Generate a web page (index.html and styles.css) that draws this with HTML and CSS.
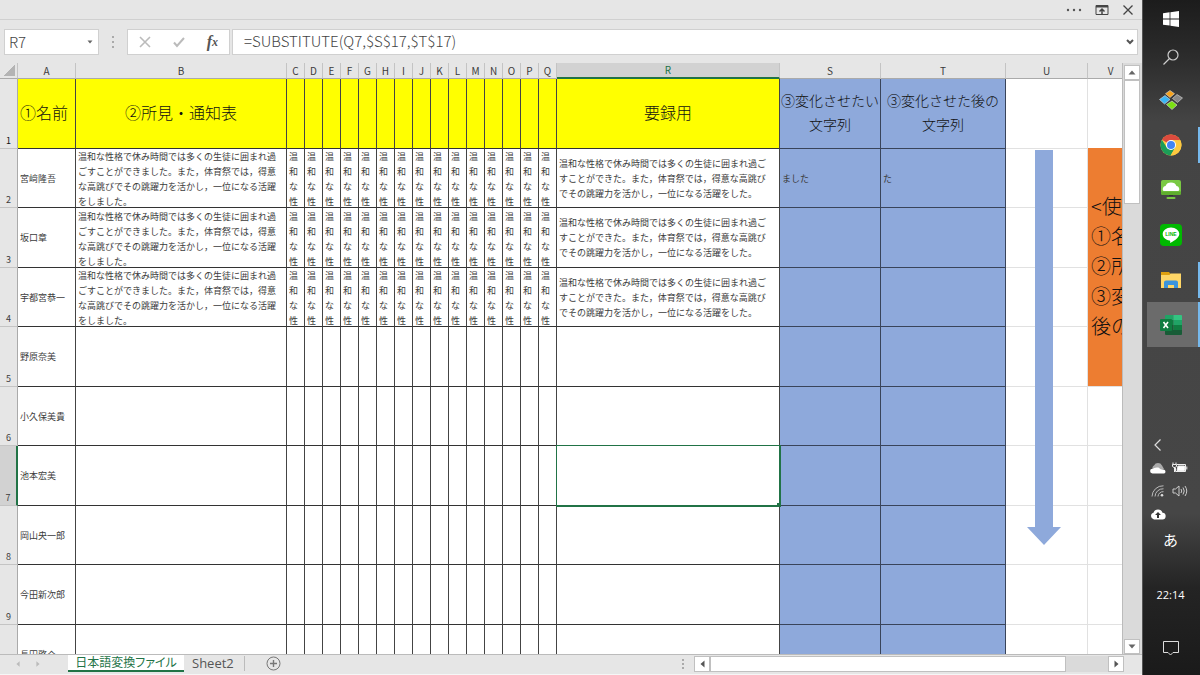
FILE: index.html
```html
<!DOCTYPE html>
<html lang="ja">
<head>
    <meta charset="UTF-8">
    <meta name="viewport" content="width=device-width, initial-scale=1.0">
    <title>日本語変換ファイル</title>
    <link rel="stylesheet" href="styles.css">
</head>
<body>
    <main class="excel">
        <!-- Window buttons -->
        <header class="titlebar">
            <button class="icon-btn" aria-label="その他">
                <svg width="16" height="12" viewBox="0 0 16 12" fill="#555"><circle cx="2" cy="6" r="1.200"/><circle cx="8" cy="6" r="1.200"/><circle cx="14" cy="6" r="1.200"/></svg>
            </button>
            <button class="icon-btn" aria-label="リボンの表示オプション">
                <svg width="14" height="12" viewBox="0 0 14 12" fill="none" stroke="#444"><path d="M1 1.500h12v9H1z"/><path d="M1 2.500h12" stroke-width="2"/><path d="M7 10V5M4.500 7.500L7 5l2.500 2.500" stroke-width="1.500"/></svg>
            </button>
            <button class="icon-btn" aria-label="閉じる">
                <svg width="12" height="12" viewBox="0 0 12 12" fill="none" stroke="#444" stroke-width="1.300"><path d="M1.500 1.500l9 9M10.500 1.500l-9 9"/></svg>
            </button>
        </header>

        <!-- Formula bar -->
        <div class="formula-bar">
            <div class="name-box">
                <input type="text" value="R7" aria-label="名前ボックス">
                <button class="icon-btn" aria-label="名前の一覧">
                    <svg width="6" height="4" viewBox="0 0 6 4" fill="#666"><path d="M0.500 0.500h5L3 3.500z"/></svg>
                </button>
            </div>
            <svg class="grip" width="4" height="12" viewBox="0 0 4 12" fill="#aaa"><path d="M1 0h2v2H1zM1 5h2v2H1zM1 10h2v2H1z"/></svg>
            <div class="formula-tools">
                <button class="icon-btn" aria-label="キャンセル">
                    <svg width="12" height="12" viewBox="0 0 12 12" fill="none" stroke="#bbb" stroke-width="1.600"><path d="M1 1l10 10M11 1L1 11"/></svg>
                </button>
                <button class="icon-btn" aria-label="入力">
                    <svg width="12" height="12" viewBox="0 0 12 12" fill="none" stroke="#bbb" stroke-width="2"><path d="M1 6.500l3 3.500L11 2"/></svg>
                </button>
                <button class="icon-btn fx" aria-label="関数の挿入">f<sub>x</sub></button>
            </div>
            <div class="formula-box">
                <input type="text" value="=SUBSTITUTE(Q7,$S$17,$T$17)" aria-label="数式バー">
                <button class="icon-btn" aria-label="数式バーの展開">
                    <svg width="8" height="6" viewBox="0 0 8 6" fill="none" stroke="#555" stroke-width="2"><path d="M1 1l3 3 3-3"/></svg>
                </button>
            </div>
        </div>

        <!-- Sheet -->
        <div class="sheet-area">
            <div class="viewport">
                <table class="sheet">
                    <colgroup>
                        <col class="c-head"><col class="c-name"><col class="c-note"><col class="c-step" span="15">
                        <col class="c-result"><col class="c-from"><col class="c-to"><col class="c-arrow"><col class="c-help">
                    </colgroup>
                    <thead><tr id="letters"></tr></thead>
                    <tbody id="rows"></tbody>
                </table>
                <svg class="arrow" width="34" height="395" viewBox="0 0 34 395" fill="#8ea9db"><path d="M8 0h18v377h8L17 395 0 377h8z"/></svg>
                <div class="help">
                    <p>&lt;使</p>
                    <p>①名</p>
                    <p>②所</p>
                    <p>③変</p>
                    <p>後の</p>
                </div>
            </div>
            <div class="v-scroll">
                <button class="scroll-btn" aria-label="上へ"><svg width="8" height="5" viewBox="0 0 8 5" fill="#666"><path d="M4 0.500L7.500 4.500h-7z"/></svg></button>
                <div class="v-thumb"></div>
                <button class="scroll-btn v-end" aria-label="下へ"><svg width="8" height="5" viewBox="0 0 8 5" fill="#666"><path d="M4 4.500L7.500 0.500h-7z"/></svg></button>
            </div>
        </div>

        <!-- Sheet tabs -->
        <footer class="tabs">
            <button class="icon-btn tab-nav" aria-label="前のシート"><svg width="5" height="8" viewBox="0 0 5 8" fill="#bbb"><path d="M0.500 4L4.500 0.500v7z"/></svg></button>
            <button class="icon-btn tab-nav" aria-label="次のシート"><svg width="5" height="8" viewBox="0 0 5 8" fill="#bbb"><path d="M4.500 4L0.500 0.500v7z"/></svg></button>
            <button class="tab tab-active">日本語変換ファイル</button>
            <button class="tab">Sheet2</button>
            <button class="icon-btn add-sheet" aria-label="新しいシート"><svg width="15" height="15" viewBox="0 0 15 15" fill="none" stroke="#777"><circle cx="7.500" cy="7.500" r="6.500"/><path d="M7.500 4v7M4 7.500h7" stroke-width="1.400"/></svg></button>
            <svg class="grip tab-grip" width="4" height="12" viewBox="0 0 4 12" fill="#aaa"><path d="M1 1h2v2H1zM1 5h2v2H1zM1 9h2v2H1z"/></svg>
            <div class="h-scroll">
                <button class="scroll-btn" aria-label="左へ"><svg width="5" height="8" viewBox="0 0 5 8" fill="#555"><path d="M0.500 4L4.500 0.500v7z"/></svg></button>
                <div class="h-thumb"></div>
                <button class="scroll-btn h-end" aria-label="右へ"><svg width="5" height="8" viewBox="0 0 5 8" fill="#555"><path d="M4.500 4L0.500 0.500v7z"/></svg></button>
            </div>
        </footer>
    </main>

    <!-- Windows taskbar -->
    <nav class="taskbar">
        <button class="task task-start" aria-label="スタート">
            <svg width="16" height="16" viewBox="0 0 16 16" fill="#fff"><path d="M0 2.300L6.600 1.300V7.500H0zM7.400 1.200L16 0v7.500H7.400zM0 8.400h6.600v6.200L0 13.700zM7.400 8.400H16V16l-8.600-1.200z"/></svg>
        </button>
        <button class="task task-search" aria-label="検索">
            <svg width="16" height="16" viewBox="0 0 16 16" fill="none" stroke="#ccc" stroke-width="1.200"><circle cx="10" cy="6" r="5"/><path d="M6.500 9.500L0.500 15.500"/></svg>
        </button>
        <button class="task" aria-label="ランチャー">
            <svg width="24" height="20" viewBox="0 0 24 20" stroke="#ddd" stroke-width="0.600"><path d="M11 0.500l4.500 3.200L11 7.500 6.500 3.700z" fill="#f6a21c"/><path d="M18 4.500l5.500 3.500-5 4.500-5-4z" fill="#888"/><path d="M6 5.500l5 4-5.500 4.500L0.500 9.500z" fill="#3bb5f5"/><path d="M13 11l5 4-5 4.500L7.500 14.500z" fill="#7be012"/></svg>
        </button>
        <button class="task task-open" aria-label="Chrome">
            <svg width="22" height="22" viewBox="0 0 22 22"><circle cx="11" cy="11" r="10.500" fill="#fc4"/><path d="M11 11L1.900 5.750A10.500 10.500 0 0 1 20.300 6.200H11z" fill="#dc4b3e"/><path d="M1.900 5.750A10.500 10.500 0 0 0 10.600 21.500L15.200 13.400 11 11 6.800 13.400z" fill="#1b9d58"/><path d="M20.300 6.200H11L15.300 13.400 10.600 21.500A10.500 10.500 0 0 0 20.300 6.200z" fill="#fdc940"/><circle cx="11" cy="11" r="5" fill="#fff"/><circle cx="11" cy="11" r="4" fill="#4285f4"/></svg>
        </button>
        <button class="task" aria-label="クラウド">
            <svg width="20" height="20" viewBox="0 0 20 20"><rect width="20" height="15" rx="2" fill="#7ac943"/><path d="M0 11.500h20V13a2 2 0 0 1-2 2H2a2 2 0 0 1-2-2z" fill="#5fae2e"/><path d="M2.500 11A3 3 0 0 1 4.500 6 5.800 5 0 0 1 15.500 6a3 3 0 0 1 2 5z" fill="#fff"/><path d="M8 15h4v1H8z" fill="#333"/><rect x="5.500" y="17" width="9" height="2" rx="1" fill="#7ac943"/></svg>
        </button>
        <button class="task" aria-label="LINE">
            <svg width="22" height="22" viewBox="0 0 22 22"><rect width="22" height="22" rx="4" fill="#00b900"/><path d="M11 3.500c-4.600 0-8.300 3-8.300 6.600 0 3.300 2.900 6 6.900 6.500.8.200.7.800.5 2.400 2-1 9.200-4.600 9.200-8.900 0-3.600-3.700-6.600-8.300-6.600z" fill="#fff"/><text x="11" y="12" text-anchor="middle" class="line-word">LINE</text></svg>
        </button>
        <button class="task task-open" aria-label="エクスプローラー">
            <svg width="22" height="18" viewBox="0 0 22 18"><path d="M1 1h8l1.500 2H21v4H1z" fill="#dfa010"/><path d="M1 4h8.500l1-1.500H21V17H1z" fill="#ffd667"/><path d="M4 17v-5.500a2 2 0 0 1 2-2h10a2 2 0 0 1 2 2V17h-4v-3H8v3z" fill="#3c94dc"/></svg>
        </button>
        <button class="task task-active" aria-label="Excel">
            <svg width="22" height="20" viewBox="0 0 22 20"><path d="M6 0h7.500v5H5V1a1 1 0 0 1 1-1z" fill="#21a366"/><path d="M13.500 0H21a1 1 0 0 1 1 1v4h-8.500z" fill="#33c481"/><path d="M5 5h8.500v5H5z" fill="#107c41"/><path d="M13.500 5H22v5h-8.500z" fill="#21a366"/><path d="M5 10h8.500v5H5z" fill="#185c37"/><path d="M13.500 10H22v5h-8.500z" fill="#107c41"/><path d="M5 15h17v4a1 1 0 0 1-1 1H6a1 1 0 0 1-1-1z" fill="#185c37"/><rect y="4" width="12" height="12" rx="1" fill="#107c41"/><path d="M3.500 7l4.500 6M8 7l-4.500 6" stroke="#fff" stroke-width="1.600"/></svg>
        </button>

        <div class="tray">
            <button class="icon-btn" aria-label="隠れているアイコン"><svg width="16" height="12" viewBox="0 0 16 12" fill="none" stroke="#ddd" stroke-width="1.200"><path d="M10.500 0.500L5 6l5.500 5.500"/></svg></button>
            <button class="icon-btn tray-left" aria-label="OneDrive"><svg width="16" height="11" viewBox="0 0 16 11"><path d="M3 7a3 3 0 0 1 1-4.500A4.500 4.500 0 0 1 12 2.500L14 6z" fill="#aaa"/><path d="M2.500 10.500a2.400 2.400 0 0 1 0-4.800C4 5.500 5 4 8 4.500c1.500.3 2 1.500 3 1.700 2-.2 4.500.3 4.500 2.500 0 1.200-1 1.800-2 1.800z" fill="#fff"/></svg></button>
            <button class="icon-btn" aria-label="バッテリー"><svg width="16" height="12" viewBox="0 0 16 12" fill="none" stroke="#eee"><path d="M5 2.500h8.500v7h-10V6" /><path d="M6 4h6.500v4.500H5z" fill="#fff"/><path d="M14.800 4.500v3M1 0.500v2M4 0.500v2M0.500 2.500h4v2L3 5.500H2L0.500 4.500zM2.500 5.500V10"/></svg></button>
            <button class="icon-btn tray-left" aria-label="Wi-Fi"><svg width="14" height="12" viewBox="0 0 14 12" fill="none" stroke="#bbb"><path d="M1 11.500A11 11 0 0 1 12.500 0.800M4 11.500a8 8 0 0 1 8.500-7.700M7 11.500a5 5 0 0 1 5.500-4.800"/><circle cx="11" cy="10.300" r="1.300" fill="#ddd" stroke="none"/></svg></button>
            <button class="icon-btn" aria-label="音量"><svg width="16" height="12" viewBox="0 0 16 12" fill="none" stroke="#ccc"><path d="M1 4h2.500L7 1v10L3.500 8H1z"/><path d="M9 4q1.500 2 0 4M11 2.500q2.500 3.500 0 7M13 1q3.500 5 0 10"/></svg></button>
            <button class="icon-btn tray-left" aria-label="アップロード"><svg width="16" height="11" viewBox="0 0 16 11"><path d="M4 10.500A3.500 3.500 0 0 1 3.500 3.700 4.800 4.800 0 0 1 12.500 3.700 3.400 3.400 0 0 1 12 10.500z" fill="#fff"/><path d="M8 3l3 3H9v3H7V6H5z" fill="#333"/></svg></button>
        </div>
        <button class="ime">あ</button>
        <time class="clock">22:14</time>
        <button class="icon-btn notify" aria-label="通知"><svg width="16" height="16" viewBox="0 0 16 16" fill="none" stroke="#ddd"><path d="M0.500 1.500h15v11H10l-2.500 2.500L5 12.500H0.500z"/></svg></button>
    </nav>

    <script>
        const letters = 'ABCDEFGHIJKLMNOPQRSTUV'.split('');
        const names = ['宮﨑隆吾', '坂口章', '宇都宮恭一', '野原奈美', '小久保美貴', '池本宏美', '岡山央一郎', '今田新次郎', '長田啓介'];
        const note = '温和な性格で休み時間では多くの生徒に囲まれ過ごすことができました。また，体育祭では，得意な高跳びでその跳躍力を活かし，一位になる活躍をしました。';
        const result = note.replaceAll('ました', 'た');
        const titles = { A: '①名前', B: '②所見・通知表', R: '要録用', S: '③変化させたい<br>文字列', T: '③変化させた後の<br>文字列' };

        // Cell colour group of a column
        function kind(letter) {
            if (letter === 'S' || letter === 'T') return 'blue';
            if (letter === 'U' || letter === 'V') return 'plain';
            return 'main';
        }

        function cellText(letter, row) {
            if (letter === 'A') return names[row - 2];
            if (row === 2 && letter === 'S') return 'ました';
            if (row === 2 && letter === 'T') return 'た';
            if (row > 4) return '';
            if (letter === 'B') return note;
            if (letter >= 'C' && letter <= 'Q') return note.slice(0, 4);
            if (letter === 'R') return result;
            return '';
        }

        document.getElementById('letters').innerHTML = '<th class="corner"></th>' +
            letters.map(l => `<th class="letter${l === 'R' ? ' current' : ''}">${l}</th>`).join('');

        let html = '<tr class="title-row"><th class="num">1</th>' +
            letters.map(l => `<td class="${kind(l)} col-${l.toLowerCase()}">${titles[l] || ''}</td>`).join('') + '</tr>';

        for (let row = 2; row <= 10; row++) {
            // the last row is only partly in view, its number is below the edge
            html += `<tr><th class="num${row === 7 ? ' current' : ''}">${row < 10 ? row : ''}</th>`;
            for (const l of letters) {
                const selected = row === 7 && l === 'R' ? ' selected' : '';
                html += `<td class="${kind(l)} col-${l.toLowerCase()}${selected}"><div class="clip">${cellText(l, row)}</div></td>`;
            }
            html += '</tr>';
        }
        document.getElementById('rows').innerHTML = html;
    </script>
</body>
</html>
```
FILE: styles.css
```css
/* Base Styles */
* {
    box-sizing: border-box;
}

body {
    margin: 0;
    display: flex;
    height: 100vh;
    overflow: hidden;
    background-color: #e6e6e6;
    color: #333;
    font-family: "Noto Sans CJK JP", sans-serif;
    font-weight: 300;
}

button, input {
    margin: 0;
    padding: 0;
    border: 0;
    background: none;
    color: inherit;
    font: inherit;
}

svg {
    display: block;
}

.icon-btn {
    display: flex;
    align-items: center;
    justify-content: center;
}

.excel {
    flex: 1;
    min-width: 0;
    display: flex;
    flex-direction: column;
}

/* Title bar */
.titlebar {
    display: flex;
    justify-content: flex-end;
    align-items: center;
    gap: 13px;
    height: 20px;
    padding-right: 8px;
    border-bottom: 1px solid #d0d0d0;
}

/* Formula bar */
.formula-bar {
    display: flex;
    align-items: center;
    height: 43px;
    padding: 0 4px;
    font-size: 15px;
    color: #444;
}

.name-box, .formula-tools, .formula-box {
    display: flex;
    align-items: center;
    height: 26px;
    background-color: #fff;
    border: 1px solid #d0d0d0;
}

.name-box {
    width: 95px;
    padding: 0 5px 0 4px;
}

.name-box input, .formula-box input {
    flex: 1;
    min-width: 0;
    height: 24px;
}

.formula-box input {
    padding-bottom: 2px;
}

.grip {
    margin: 0 12px;
}

.formula-tools {
    width: 103px;
    justify-content: space-between;
    padding: 0 11px;
}

.fx {
    font: italic bold 16px "Liberation Serif", serif;
    line-height: 20px;
    color: #555;
}

.fx sub {
    font-size: 12px;
    line-height: 12px;
    vertical-align: baseline;
}

.formula-box {
    flex: 1;
    margin-left: 2px;
    padding: 0 3px 0 11px;
}

/* Sheet */
.sheet-area {
    flex: 1;
    min-height: 0;
    display: flex;
}

.viewport {
    position: relative;
    flex: 1;
    min-width: 0;
    overflow: hidden;
    background-color: #fff;
    border-right: 1px solid #bbb;
}

.sheet {
    width: 1134px;
    table-layout: fixed;
    border-collapse: separate;
    border-spacing: 0;
    font-size: 9px;
    font-weight: 400;
    line-height: 15px;
    color: #3c3c3c;
}

.c-head { width: 18px; }
.c-name { width: 58px; }
.c-note { width: 211px; }
.c-step { width: 18px; }
.c-result { width: 223px; }
.c-from { width: 101px; }
.c-to { width: 125px; }
.c-arrow { width: 82px; }
.c-help { width: 46px; }

th, td {
    padding: 0;
    font-weight: inherit;
    overflow: hidden;
}

.letter, .corner {
    height: 16px;
    background-color: #e6e6e6;
    border-right: 1px solid #c4c4c4;
    border-bottom: 1px solid #aaa;
    font: 10px "Noto Sans CJK JP", sans-serif;
    line-height: 14px;
}

.corner {
    background-image: linear-gradient(135deg, transparent 50%, #b4b4b4 50%);
    background-size: 11px 11px;
    background-position: right 2px bottom 2px;
    background-repeat: no-repeat;
}

.num {
    background-color: #e6e6e6;
    border-right: 1px solid #aaa;
    border-bottom: 1px solid #c4c4c4;
    vertical-align: bottom;
    font: 9px "Noto Sans CJK JP", sans-serif;
    line-height: 15px;
}

.letter.current {
    background-color: #d2d2d2;
    border-bottom: 2px solid #217346;
    color: #217346;
}

.num.current {
    background-color: #d2d2d2;
    border-right: 2px solid #217346;
}

tbody tr {
    height: 59px;
}

tbody tr:nth-child(odd) {
    height: 60px;
}

tbody tr.title-row:first-child {
    height: 70px;
    font-size: 16px;
    font-weight: 300;
    line-height: 24px;
    text-align: center;
    white-space: nowrap;
    color: #111;
}

.title-row td {
    padding-bottom: 4px;
}

.title-row .col-a {
    padding-left: 2px;
    text-align: left;
}

.main {
    border-right: 1px solid #444;
    border-bottom: 1px solid #333;
}

.title-row .main {
    background-color: #ff0;
}

.blue {
    background-color: #8ea9db;
    border-right: 1px solid #39445a;
    border-bottom: 1px solid #39445a;
}

.title-row .blue {
    font-size: 14px;
}

.plain {
    border-right: 1px solid #e1e1e1;
    border-bottom: 1px solid #e1e1e1;
}

.clip {
    max-height: 58px;
    padding: 0 2px;
    overflow: hidden;
    word-break: break-all;
}

.col-b .clip {
    padding-right: 8px;
}

.col-r .clip {
    padding-right: 10px;
}

.selected {
    position: relative;
    overflow: visible;
    outline: 1px solid #217346;
    border-color: #217346;
}

/* Fill handle */
.selected::after {
    content: "";
    position: absolute;
    right: -2px;
    bottom: -2px;
    width: 4px;
    height: 4px;
    background-color: #217346;
}

/* Shapes lying over the sheet */
.arrow {
    position: absolute;
    top: 87px;
    left: 1027px;
}

.help {
    position: absolute;
    top: 85px;
    left: 1088px;
    width: 200px;
    height: 238px;
    padding: 43px 3px;
    background-color: #ed7d31;
    color: #111;
    font-size: 20px;
    line-height: 30px;
}

.help p {
    margin: 0;
}

/* Scroll bars */
.v-scroll {
    display: flex;
    flex-direction: column;
    align-items: center;
    width: 19px;
    padding: 2px 2px 0 0;
    background-color: #dadada;
}

.scroll-btn {
    display: flex;
    flex: none;
    align-items: center;
    justify-content: center;
    width: 16px;
    height: 15px;
    background-color: #fff;
    border: 1px solid #c0c0c0;
}

.v-thumb {
    width: 16px;
    height: 21%;
    background-color: #fff;
    border: 1px solid #c0c0c0;
}

.v-end {
    margin-top: auto;
}

.h-scroll {
    display: flex;
    width: 430px;
    height: 16px;
    margin-right: 18px;
    background-color: #dadada;
}

.h-scroll .scroll-btn {
    height: 16px;
}

.h-thumb {
    width: 356px;
    background-color: #fff;
    border: 1px solid #c0c0c0;
}

.h-end {
    margin-left: auto;
}

/* Sheet tabs */
.tabs {
    display: flex;
    align-items: center;
    height: 21px;
    padding-bottom: 2px;
    border-top: 1px solid #bbb;
    border-bottom: 1px solid #f6f6f6;
}

.tab-nav {
    width: 20px;
    padding-left: 16px;
}

.tab {
    height: 17px;
    padding: 0 8px;
    font: 13px "Open Sans", "Noto Sans CJK JP", sans-serif;
    line-height: 15px;
    color: #555;
}

.tab-active {
    width: 116px;
    margin-left: 28px;
    padding: 0;
    background-color: #fff;
    border-bottom: 2px solid #217346;
    color: #217346;
    font-size: 12px;
    font-feature-settings: "palt";
}

.add-sheet {
    margin-left: 2px;
    padding-left: 21px;
    border-left: 1px solid #bbb;
}

.tab-grip {
    margin-left: auto;
    margin-right: 9px;
}

/* Taskbar */
.taskbar {
    display: flex;
    flex-direction: column;
    width: 58px;
    border-left: 1px solid #555;
    background: linear-gradient(#1c1c1c 0, #2b2b2b 8%, #444 18%, #464646 76%, #242424 87%, #1a1a1a 100%);
    color: #fff;
}

.task {
    display: flex;
    flex: none;
    align-items: center;
    justify-content: center;
    height: 45px;
    padding-right: 2px;
}

.task-start {
    height: 37px;
}

.task-search {
    height: 40px;
}

/* Blue marker of a running program */
.task-open {
    background: linear-gradient(#76b9ed, #76b9ed) right / 2px 36px no-repeat;
}

.task-active {
    margin-left: 4px;
    padding-right: 4px;
    background-color: #6b6b6b;
    border-right: 2px solid #76b9ed;
}

.line-word {
    fill: #00b900;
    font: bold 5px "Liberation Sans", sans-serif;
}

.tray {
    display: grid;
    grid-template-columns: 16px 16px;
    grid-auto-rows: 12px;
    gap: 11px 6px;
    margin: auto 0 0 7px;
}

.tray-left {
    grid-column: 1;
}

.ime {
    margin-top: 10px;
    height: 20px;
    padding-right: 2px;
    font-size: 15px;
    font-weight: 400;
    line-height: 20px;
}

.clock {
    margin-top: 35px;
    padding-right: 2px;
    font: 11px "Open Sans", sans-serif;
    line-height: 20px;
    text-align: center;
}

.notify {
    margin: 33px 0 18px;
    height: 19px;
    padding-right: 2px;
}
```
